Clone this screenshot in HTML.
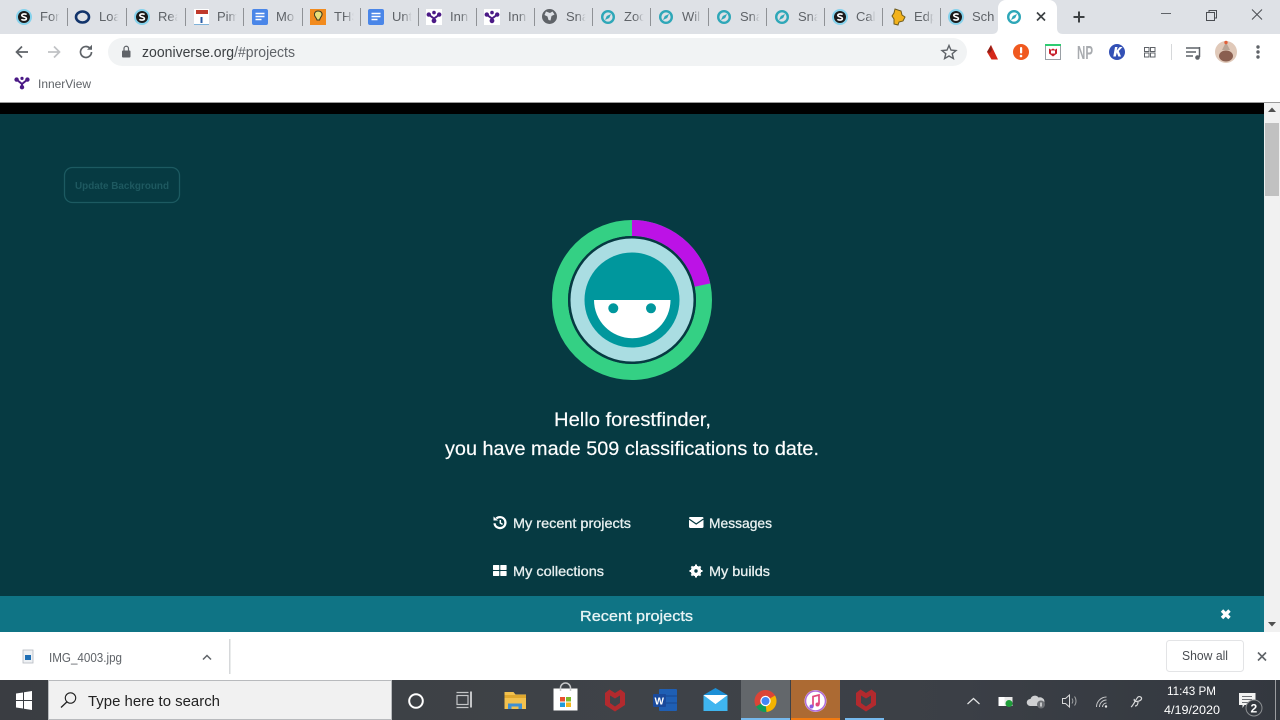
<!DOCTYPE html>
<html>
<head>
<meta charset="utf-8">
<style>
html,body{margin:0;padding:0;width:1280px;height:720px;overflow:hidden;background:#fff}
svg{display:block}
text{font-family:"Liberation Sans",sans-serif}
.tab{font-size:13px;fill:#5f6368}
.pg{font-size:14px;fill:#e8f0f0;stroke:#e8f0f0;stroke-width:.3px}
.big{font-size:19px;fill:#fff;stroke:#fff;stroke-width:.15px}
.tb{fill:#fff;font-size:12px}
</style>
</head>
<body>
<svg width="1280" height="720" viewBox="0 0 1280 720" xmlns="http://www.w3.org/2000/svg">
<defs>
<symbol id="sky" viewBox="0 0 16 16" overflow="visible"><circle cx="8" cy="8" r="8" fill="#86d2ec"/><circle cx="8" cy="8" r="6" fill="#1a1a1a"/><path d="M10.600 5.600C9.600 4.600 5.800 4.600 5.800 6.400 5.800 8.200 10.400 7.600 10.400 9.600 10.400 11.400 6.400 11.400 5.400 10.200" fill="none" stroke="#fff" stroke-width="1.600"/></symbol>
<symbol id="zoo" viewBox="0 0 16 16" overflow="visible"><circle cx="8" cy="8" r="5.800" fill="none" stroke="#2ea7b8" stroke-width="2.400"/><path d="M11 5 6.800 7 5 11 9.200 9Z" fill="#2ea7b8"/></symbol>
<symbol id="doc" viewBox="0 0 16 16" overflow="visible"><rect width="16" height="16" rx="2" fill="#4a86e8"/><path d="M3.500 4.500h9M3.500 7.500h9M3.500 10.500h6" stroke="#fff" stroke-width="1.600"/></symbol>
<symbol id="inn" viewBox="0 0 16 16" overflow="visible"><rect width="16" height="16" fill="#fff"/><path d="M2.500 5.500 8 9.500 13.500 5.500M8 9.500V13" stroke="#4b1a86" stroke-width="2" fill="none"/><circle cx="2.800" cy="5.600" r="2.200" fill="#4b1a86"/><circle cx="13.200" cy="5.600" r="2.200" fill="#4b1a86"/><circle cx="8" cy="3.600" r="1.800" fill="#4b1a86"/><circle cx="8" cy="11.800" r="2.400" fill="#4b1a86"/></symbol>
<symbol id="mc" viewBox="0 0 22 24" overflow="visible"><path d="M1 5 5.500 1.500 11 5 16.500 1.500 21 5V17L11 23.500 1 17Z" fill="#b22a2e"/><path d="M6 7.500 11 10.500 16 7.500V15L11 18.500 6 15Z" fill="#3f4349"/></symbol>
<linearGradient id="tbg" x1="0" x2="1" y1="0" y2="0"><stop offset="0" stop-color="#3a3d42"/><stop offset=".5" stop-color="#3f4348"/><stop offset=".75" stop-color="#3b3f46"/><stop offset="1" stop-color="#33383f"/></linearGradient>
<linearGradient id="fd" x1="0" x2="1" y1="0" y2="0"><stop offset="0" stop-color="#dee1e6" stop-opacity="0"/><stop offset=".55" stop-color="#dee1e6"/><stop offset="1" stop-color="#dee1e6"/></linearGradient>
<symbol id="fade" viewBox="0 0 16 20" overflow="visible"><rect width="16" height="20" fill="url(#fd)"/></symbol>
</defs>

<!-- tab strip -->
<rect width="1280" height="34" fill="#dee1e6"/>
<use href="#sky" x="16" y="9" width="16" height="16"/>
<text class="tab" x="40" y="21">For</text>
<use href="#fade" x="51" y="7" width="16" height="20"/>
<ellipse cx="82.500" cy="17" rx="6.500" ry="5.500" fill="none" stroke="#12346b" stroke-width="2.600"/>
<text class="tab" x="99" y="21">Loa</text>
<use href="#fade" x="110" y="7" width="16" height="20"/>
<use href="#sky" x="134" y="9" width="16" height="16"/>
<text class="tab" x="158" y="21">Rea</text>
<use href="#fade" x="169" y="7" width="16" height="20"/>
<rect x="194" y="9" width="15" height="16" fill="#fff"/><rect x="196" y="10" width="12" height="4" fill="#c0392b"/><rect x="200.500" y="17" width="2" height="6" fill="#2b5ea7"/><path d="M194 24.500h15" stroke="#7fb2d9"/>
<text class="tab" x="217" y="21">Pim</text>
<use href="#fade" x="228" y="7" width="16" height="20"/>
<use href="#doc" x="252" y="9" width="16" height="16"/>
<text class="tab" x="276" y="21">Mo</text>
<use href="#fade" x="287" y="7" width="16" height="20"/>
<rect x="310" y="9" width="16" height="16" fill="#f28b1e"/><path d="M318 11c3 0 4.500 2 4 4-.4 1.600-2 2.500-2.400 5h-2.600c-.5-2-2-3-2.500-4.800C314 13 315.500 11 318 11Z" fill="#e8df7a" stroke="#3b3b20"/>
<text class="tab" x="334" y="21">THS</text>
<use href="#fade" x="345" y="7" width="16" height="20"/>
<use href="#doc" x="368" y="9" width="16" height="16"/>
<text class="tab" x="392" y="21">Unt</text>
<use href="#fade" x="403" y="7" width="16" height="20"/>
<use href="#inn" x="426" y="9" width="16" height="16"/>
<text class="tab" x="450" y="21">Inn</text>
<use href="#fade" x="461" y="7" width="16" height="20"/>
<use href="#inn" x="484" y="9" width="16" height="16"/>
<text class="tab" x="508" y="21">Inn</text>
<use href="#fade" x="519" y="7" width="16" height="20"/>
<circle cx="549.500" cy="16.500" r="7.500" fill="#5f6368"/><path d="M546 11.500l4 1.500 2.500-1.500 2 3-3 1.500-1 4.500-2-.5-1-3.500-3-1.500Z" fill="#dee1e6"/>
<text class="tab" x="566" y="21">Sna</text>
<use href="#fade" x="577" y="7" width="16" height="20"/>
<use href="#zoo" x="600" y="9" width="16" height="16"/>
<text class="tab" x="624" y="21">Zoc</text>
<use href="#fade" x="635" y="7" width="16" height="20"/>
<use href="#zoo" x="658" y="9" width="16" height="16"/>
<text class="tab" x="682" y="21">Wil</text>
<use href="#fade" x="693" y="7" width="16" height="20"/>
<use href="#zoo" x="716" y="9" width="16" height="16"/>
<text class="tab" x="740" y="21">Sna</text>
<use href="#fade" x="751" y="7" width="16" height="20"/>
<use href="#zoo" x="774" y="9" width="16" height="16"/>
<text class="tab" x="798" y="21">Sna</text>
<use href="#fade" x="809" y="7" width="16" height="20"/>
<use href="#sky" x="832" y="9" width="16" height="16"/>
<text class="tab" x="856" y="21">Cal</text>
<use href="#fade" x="867" y="7" width="16" height="20"/>
<path d="M895 9l6 2 1 4 3 2-2 4-4 1-1 3-4-1v-5l-2-3 2-3Z" fill="#f2b21c" stroke="#6d5a1d"/>
<text class="tab" x="914" y="21">Edp</text>
<use href="#fade" x="925" y="7" width="16" height="20"/>
<use href="#sky" x="948" y="9" width="16" height="16"/>
<text class="tab" x="972" y="21">Sch</text>
<g stroke="#8f9296" stroke-width="1">
<path d="M67.500 8V26M126.500 8V26M185.500 8V26M243.500 8V26M302.500 8V26M360.500 8V26M418.500 8V26M476.500 8V26M534.500 8V26M592.500 8V26M650.500 8V26M708.500 8V26M766.500 8V26M824.500 8V26M882.500 8V26M940.500 8V26"/>
</g>
<!-- active tab -->
<path d="M992 34c4 0 6-2 6-6V8c0-4 3-8 8-8h43c5 0 8 4 8 8v20c0 4 2 6 6 6Z" fill="#fff"/>
<use href="#zoo" x="1006" y="9" width="16" height="16"/>
<path d="M1037 12.500l8 8M1045 12.500l-8 8" stroke="#3c4043" stroke-width="1.700"/>
<path d="M1079 11.500v11M1073.500 17h11" stroke="#3c4043" stroke-width="2"/>
<path d="M1161 13.500h10" stroke="#5f6368" stroke-width="1"/>
<path d="M1206.500 12.500h8v8h-8ZM1209 12.500v-2h7.500v7.500h-2" fill="none" stroke="#4a4d52" stroke-width="1"/>
<path d="M1252 9.500l10 10M1262 9.500l-10 10" stroke="#4a4d52" stroke-width="1"/>

<!-- toolbar -->
<rect y="34" width="1280" height="68" fill="#fff"/>
<rect x="108" y="38" width="859" height="28" rx="14" fill="#f1f3f4"/>
<path d="M28 52H16.500M22 46.500 16.500 52 22 57.500" fill="none" stroke="#5f6368" stroke-width="1.700"/>
<path d="M48 52H59.500M54 46.500 59.500 52 54 57.500" fill="none" stroke="#c0c2c5" stroke-width="1.700"/>
<path d="M91.500 52a5.500 5.500 0 1 1-1.700-4" fill="none" stroke="#5f6368" stroke-width="1.700"/><path d="M92 44.800v5h-5Z" fill="#5f6368"/>
<rect x="122" y="50.500" width="8.500" height="7" rx="1" fill="#5f6368"/><path d="M124 50.500v-2a2.200 2.200 0 0 1 4.500 0v2" fill="none" stroke="#5f6368" stroke-width="1.200"/>
<text x="142" y="57" font-size="14.500" fill="#3c4043" textLength="153" lengthAdjust="spacingAndGlyphs">zooniverse.org<tspan fill="#5f6368">/#projects</tspan></text>
<path d="M949 45.500l2 4.600 5 .4-3.800 3.200 1.200 4.900-4.400-2.600-4.400 2.600 1.200-4.900-3.800-3.200 5-.4Z" fill="none" stroke="#5f6368" stroke-width="1.400"/>
<path d="M987 52l4-7 7 14.500h-6.500Z" fill="#d4281a"/><path d="M987 52l4-7 1 5-2 3Z" fill="#8e1f17"/>
<circle cx="1021" cy="52" r="8" fill="#f0591f"/><rect x="1020" y="47" width="2.200" height="6.500" rx="1" fill="#fff"/><circle cx="1021" cy="56" r="1.300" fill="#fff"/>
<rect x="1045.500" y="45.500" width="15" height="14" fill="#fff" stroke="#9aa0a6"/><rect x="1045" y="44" width="16" height="2" fill="#2ecc71"/><path d="M1049 48.500l2 1.200 2-1.200 2 1.200 2-1.200v5l-4 3-4-3Z" fill="#c8202c"/><rect x="1051" y="50.500" width="4" height="3" fill="#fff"/>
<text x="1077" y="59" font-size="18" font-weight="bold" fill="#a8abaf" textLength="16" lengthAdjust="spacingAndGlyphs">NP</text>
<circle cx="1117" cy="52" r="8" fill="#3350b5"/><path d="M1115 47h2.500l-.8 3.500 3-3.500h2.800l-3.700 4 2.200 5.500h-2.700l-1.500-4-1 4h-2.500Z" fill="#fff"/>
<g fill="none" stroke="#5f6368" stroke-width="1"><rect x="1144.500" y="47.500" width="4.500" height="4"/><rect x="1150.500" y="47.500" width="4.500" height="4"/><rect x="1144.500" y="53" width="4.500" height="4"/><rect x="1150.500" y="53" width="4.500" height="4"/></g>
<path d="M1171.500 44v16" stroke="#d6d8da"/>
<path d="M1186 48h13M1186 52h10M1186 56h7" stroke="#5f6368" stroke-width="1.400"/><path d="M1199.500 47v10" stroke="#5f6368" stroke-width="1.500"/><circle cx="1197.500" cy="57.500" r="2.300" fill="#5f6368"/>
<circle cx="1226" cy="52" r="11" fill="#e0c9b9"/><ellipse cx="1226" cy="56" rx="7" ry="5.500" fill="#8a5f50"/><path d="M1226 42l-4 8h8Z" fill="#b9a596"/><circle cx="1226" cy="42.500" r="1.700" fill="#e0603a"/>
<circle cx="1258" cy="47" r="1.700" fill="#5f6368"/><circle cx="1258" cy="52" r="1.700" fill="#5f6368"/><circle cx="1258" cy="57" r="1.700" fill="#5f6368"/>

<!-- bookmarks -->
<g transform="translate(14,76)"><path d="M2.500 3.500 8 8 13.500 3.500M8 8v4" stroke="#4b1a86" stroke-width="2" fill="none"/><circle cx="2.600" cy="3.600" r="2.200" fill="#4b1a86"/><circle cx="13.400" cy="3.600" r="2.200" fill="#4b1a86"/><circle cx="8" cy="2.400" r="1.600" fill="#4b1a86"/><circle cx="8" cy="11.200" r="2.200" fill="#4b1a86"/></g>
<text x="38" y="88" font-size="12" fill="#5f6368" textLength="53" lengthAdjust="spacingAndGlyphs">InnerView</text>
<rect y="102" width="1280" height="1" fill="#9a9a9a"/>

<!-- page -->
<rect y="103" width="1264" height="11" fill="#000"/>
<rect y="114" width="1264" height="482" fill="#063a42"/>
<rect x="64.500" y="167.500" width="115" height="35" rx="8" fill="none" stroke="#1c5a61" stroke-width="1.300"/>
<text x="75" y="189" font-size="10" font-weight="bold" fill="#1e5960" textLength="94" lengthAdjust="spacingAndGlyphs">Update Background</text>

<circle cx="632" cy="300" r="72" fill="none" stroke="#34d084" stroke-width="16"/>
<path d="M632 220A80 80 0 0 1 710.250 283.400L694.600 286.700A64 64 0 0 0 632 236Z" fill="#bc12e6"/>
<circle cx="632" cy="300" r="64" fill="#063a42"/>
<circle cx="632" cy="300" r="61.500" fill="#aadde2"/>
<circle cx="632" cy="300" r="47.500" fill="#00979d"/>
<path d="M594 300H670.500A38.250 38.250 0 0 1 594 300Z" fill="#fff"/>
<circle cx="613.300" cy="308.300" r="5" fill="#00979d"/>
<circle cx="651" cy="308.300" r="5" fill="#00979d"/>

<text class="big" x="554" y="426" textLength="157" lengthAdjust="spacingAndGlyphs">Hello forestfinder,</text>
<text class="big" x="445" y="455" textLength="374" lengthAdjust="spacingAndGlyphs">you have made 509 classifications to date.</text>

<!-- links -->
<path d="M496.300 518.500a5.500 5.500 0 1 1-1.800 4.700" fill="none" stroke="#fff" stroke-width="2.200"/><path d="M493.500 516.500l4.500 4h-4.500Z" fill="#fff"/><path d="M500.300 520v3l2.300 1.400" fill="none" stroke="#fff" stroke-width="1.500"/>
<text class="pg" x="513" y="528" textLength="118" lengthAdjust="spacingAndGlyphs">My recent projects</text>
<rect x="689" y="517" width="14.500" height="11" rx="1.200" fill="#fff"/><path d="M689 519 696.200 524 703.500 519" fill="none" stroke="#063a42" stroke-width="1.200"/>
<text class="pg" x="709" y="528" textLength="63" lengthAdjust="spacingAndGlyphs">Messages</text>
<g fill="#fff"><rect x="493" y="565" width="6.300" height="5" rx=".6"/><rect x="500.300" y="565" width="6.300" height="5" rx=".6"/><rect x="493" y="571" width="6.300" height="5" rx=".6"/><rect x="500.300" y="571" width="6.300" height="5" rx=".6"/></g>
<text class="pg" x="513" y="576" textLength="91" lengthAdjust="spacingAndGlyphs">My collections</text>
<circle cx="696" cy="571" r="3.800" fill="none" stroke="#fff" stroke-width="3"/><path d="M696 564.500v13M689.500 571h13M691.400 566.400l9.200 9.200M700.600 566.400l-9.200 9.200" stroke="#fff" stroke-width="2"/><circle cx="696" cy="571" r="1.700" fill="#063a42"/>
<text class="pg" x="709" y="576" textLength="61" lengthAdjust="spacingAndGlyphs">My builds</text>

<rect y="596" width="1264" height="36" fill="#0f7485"/>
<text x="580" y="621" font-size="15" fill="#e8f4f5" stroke="#e8f4f5" stroke-width=".3" textLength="113" lengthAdjust="spacingAndGlyphs">Recent projects</text>
<path d="M1222 610.500l7.500 7.500M1229.500 610.500l-7.500 7.500" stroke="#fff" stroke-width="3.400"/>

<!-- scrollbar -->
<rect x="1264" y="103" width="16" height="529" fill="#f1f1f1"/>
<rect x="1265" y="123" width="14" height="73" fill="#c1c1c1"/>
<path d="M1272 107.500l4 4.500h-8Z" fill="#505050"/>
<path d="M1272 626.500l4-4.500h-8Z" fill="#505050"/>

<!-- download bar -->
<rect y="632" width="1280" height="48" fill="#fff"/>
<rect x="23" y="650" width="10" height="13" fill="#eef1f4" stroke="#b5bac0" stroke-width=".8"/><rect x="25" y="655" width="6" height="5" fill="#1f6fb5"/>
<text x="49" y="662" font-size="13" fill="#5f6368" textLength="73" lengthAdjust="spacingAndGlyphs">IMG_4003.jpg</text>
<path d="M203 659.500l4-4 4 4" fill="none" stroke="#5f6368" stroke-width="1.500"/>
<rect x="229" y="639" width="1.500" height="35" fill="#d6d8da"/>
<rect x="1166.500" y="640.500" width="77" height="31" rx="3" fill="#fff" stroke="#e3e4e6"/>
<text x="1182" y="660" font-size="12.500" fill="#4a4d52" textLength="46" lengthAdjust="spacingAndGlyphs">Show all</text>
<path d="M1258 652.500l8 8M1266 652.500l-8 8" stroke="#5f6368" stroke-width="1.600"/>

<!-- taskbar -->
<rect y="680" width="1280" height="40" fill="url(#tbg)"/>
<g fill="#fff"><path d="M16 693.500l7-1v7.500h-7ZM24 692.300l8-1.300v9h-8ZM16 701h7v7.500l-7-1ZM24 701h8v9l-8-1.300Z"/></g>
<rect x="48.500" y="680.500" width="343" height="39" fill="#f1f1f1" stroke="#b8babd"/>
<circle cx="70.500" cy="698" r="5.200" fill="none" stroke="#222" stroke-width="1.100"/><path d="M66.800 702 61 707.500" stroke="#222" stroke-width="1.300"/>
<text x="88" y="706" font-size="14.500" fill="#222" textLength="132" lengthAdjust="spacingAndGlyphs">Type here to search</text>
<circle cx="416" cy="701" r="6.800" fill="none" stroke="#fff" stroke-width="2"/>
<path d="M456.500 692.500h12M456.500 707.500h12" stroke="#c4c5c7" stroke-width="1.300"/><rect x="457" y="695.500" width="11" height="9" fill="none" stroke="#c4c5c7" stroke-width="1.200"/><rect x="470" y="691.500" width="2" height="16" fill="#c4c5c7"/>
<path d="M504.500 692h9l2 2.500h10.500v14.500h-21.500Z" fill="#f2c14e"/><rect x="504.500" y="695" width="21.500" height="3" fill="#e0a82e"/><path d="M508 709v-5.500h14v5.500h-3.500v-2.500h-7v2.500Z" fill="#3f8fd2"/>
<path d="M553.500 695h24v22h-24Z" fill="#fff" transform="translate(0,-6.500)"/><path d="M560.500 689v-3a5 5 0 0 1 10 0v3" fill="none" stroke="#c8c9cb" stroke-width="1.500" transform="translate(0,2)"/>
<rect x="560" y="697" width="5" height="4.500" fill="#e8502e"/><rect x="566" y="697" width="5" height="4.500" fill="#7fba2a"/><rect x="560" y="702.500" width="5" height="4.500" fill="#1f9bd9"/><rect x="566" y="702.500" width="5" height="4.500" fill="#f5b81c"/>
<use href="#mc" x="604" y="688" width="22" height="24"/>
<rect x="659" y="689" width="18" height="22" rx="1" fill="#1f5fb4"/><path d="M659 696h18M659 703h18" stroke="#17478f"/><rect x="653" y="694" width="13" height="13" rx="1" fill="#1a4a9c"/><text x="654.500" y="704.500" font-size="10" font-weight="bold" fill="#fff">W</text>
<path d="M703.500 695 715.500 688 727.500 695V711H703.500Z" fill="#1d8fd6"/><path d="M703.500 695H727.500V711H703.500Z" fill="#3fb5ef"/><path d="M703.500 695 715.500 704 727.500 695 715.500 700Z" fill="#fff"/><path d="M703.500 695 715.500 704 727.500 695" fill="#fff"/>
<rect x="741" y="680" width="49" height="40" fill="#63676b"/><rect x="741" y="718" width="49" height="2" fill="#76b9ed"/>
<circle cx="765.500" cy="701" r="11" fill="#db4437"/><path d="M765.500 701 756 706.500A11 11 0 0 0 766.500 712Z" fill="#0f9d58"/><path d="M765.500 701 775 695.500A11 11 0 0 1 766.500 712Z" fill="#f4b400"/><circle cx="765.500" cy="701" r="5.200" fill="#fff"/><circle cx="765.500" cy="701" r="4" fill="#4285f4"/>
<rect x="791" y="680" width="49" height="40" fill="#ac6a33"/><rect x="791" y="718" width="49" height="2" fill="#f27a10"/>
<circle cx="815.500" cy="701" r="11" fill="#fff"/><circle cx="815.500" cy="701" r="10" fill="none" stroke="#b06ad9" stroke-width="1.500"/><path d="M813 706.500V696.500l6-1.500v9.500" fill="none" stroke="#e2487d" stroke-width="1.700"/><circle cx="811.500" cy="706.500" r="2" fill="#8a5be0"/><circle cx="817.500" cy="704.500" r="2" fill="#e2487d"/>
<use href="#mc" x="855" y="688" width="22" height="24"/>
<rect x="845" y="718" width="39" height="2" fill="#76b9ed"/>

<!-- tray -->
<path d="M967.500 704l6-5.500 6 5.500" fill="none" stroke="#e4e5e6" stroke-width="1.200"/>
<rect x="998.500" y="697" width="14" height="9" fill="#e8e8e8"/><rect x="998.500" y="697" width="6" height="9" fill="#fff"/><circle cx="1009" cy="703.500" r="3.500" fill="#1f9d3a"/>
<path d="M1030 706a3.500 3.500 0 0 1 .5-7 4.500 4.500 0 0 1 8-1.500 4 4 0 0 1 3 8.500Z" fill="#cfd0d2"/><circle cx="1041" cy="704.500" r="4" fill="#6d7075"/><rect x="1040.400" y="702.500" width="1.200" height="4" fill="#fff"/>
<path d="M1062.500 698.500h3l4-3.500v12l-4-3.500h-3Z" fill="none" stroke="#d8d9da" stroke-width="1"/><path d="M1072 698.500c1 1.500 1 3.500 0 5M1074.500 696.500c2 2.500 2 6.500 0 9" fill="none" stroke="#a0a2a5" stroke-width="1"/>
<path d="M1096.500 707a10 10 0 0 1 10-10M1099.500 707a7 7 0 0 1 7-7M1102.500 707a4 4 0 0 1 4-4" fill="none" stroke="#c8c9cb" stroke-width="1"/><circle cx="1106" cy="706.500" r="1.200" fill="#e8e8e8"/>
<path d="M1131 707c2-1 5-8 7-10 1.500-1 4 0 3.500 2-.5 1.500-3 2.500-5 2.500-1.500 0-3-1-2-2.500M1135 706c2 0 3-2 3-4" fill="none" stroke="#d8d9da" stroke-width="1.200"/>
<text class="tb" x="1167" y="695" textLength="49" lengthAdjust="spacingAndGlyphs">11:43 PM</text>
<text class="tb" x="1164" y="714" textLength="56" lengthAdjust="spacingAndGlyphs">4/19/2020</text>
<path d="M1239 693h16.500v12h-11l-2 3v-3h-3.500Z" fill="#f2f2f2"/><path d="M1242 696.500h10M1242 699.500h10M1242 702.500h7" stroke="#6d7075" stroke-width="1"/>
<circle cx="1254" cy="708" r="8" fill="#33383f" stroke="#8c8f92"/><text x="1250.500" y="712.500" font-size="12" font-weight="bold" fill="#fff">2</text>
<rect x="1275" y="680" width="1" height="40" fill="#9a9c9f"/>
</svg>
</body>
</html>
